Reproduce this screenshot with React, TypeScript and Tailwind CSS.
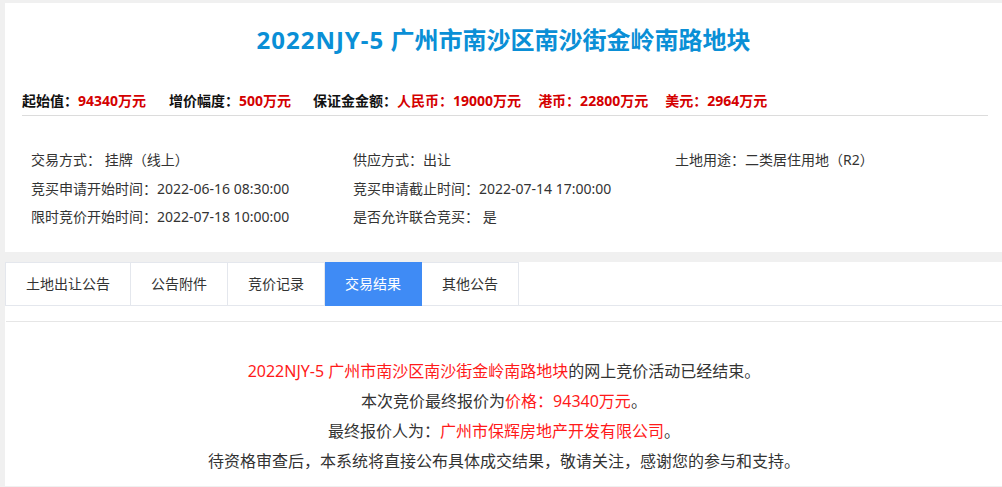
import React from "react";

const Red = ({ children }: { children: React.ReactNode }) => (
  <span className="text-[#d40000]">{children}</span>
);

export default function App() {
  const tabs = ["土地出让公告", "公告附件", "竞价记录", "交易结果", "其他公告"];
  return (
    <div
      className="min-h-screen bg-[#f0f0f0] pt-[3px] pl-[5px]"
      style={{ fontFamily: '"Noto Sans", "Noto Sans CJK SC", sans-serif' }}
    >
      <div className="bg-white pb-[20px]">
        <h1 className="pt-[22px] text-center text-[24px] font-bold leading-[30px] text-[#0a8fd6]">
          <span className="tracking-[1px]">2022NJY-5</span> 广州市南沙区南沙街金岭南路地块
        </h1>
        <div className="mt-[36px] flex pl-[17px] text-[14px] font-bold leading-[20px] text-[#111]">
          <span>
            起始值：<Red>94340万元</Red>
          </span>
          <span className="ml-[23px]">
            增价幅度：<Red>500万元</Red>
          </span>
          <span className="ml-[22px]">
            保证金金额：<Red>人民币：19000万元</Red>
          </span>
          <span className="ml-[17px]">
            <Red>港币：22800万元</Red>
          </span>
          <span className="ml-[17px]">
            <Red>美元：2964万元</Red>
          </span>
        </div>
        <div className="ml-[17px] mt-[4px] h-px w-[966px] bg-[#dcdcdc]" />
        <div className="mt-[30px] grid grid-cols-[322px_322px_1fr] pl-[26px] text-[14px] leading-[28.5px] text-[#333]">
          <div>交易方式： 挂牌（线上）</div>
          <div>供应方式：出让</div>
          <div>土地用途：二类居住用地（R2）</div>
          <div>竞买申请开始时间：2022-06-16 08:30:00</div>
          <div>竞买申请截止时间：2022-07-14 17:00:00</div>
          <div></div>
          <div>限时竞价开始时间：2022-07-18 10:00:00</div>
          <div>是否允许联合竞买： 是</div>
          <div></div>
        </div>
      </div>

      <div className="mt-[10px] bg-white">
        <div className="flex border-b border-[#e4e7ed]">
          {tabs.map((t, i) => (
            <div
              key={t}
              className={
                i === 3
                  ? "-mb-px h-[44px] border-t border-r border-b border-[#3f8bf5] bg-[#3f8bf5] px-[20px] text-[14px] leading-[42px] text-white"
                  : i === 0
                  ? "h-[43px] border-t border-r border-l border-[#e4e7ed] px-[20px] text-[14px] leading-[42px] text-[#333]"
                  : "h-[43px] border-t border-r border-[#e4e7ed] px-[20px] text-[14px] leading-[42px] text-[#333]"
              }
            >
              {t}
            </div>
          ))}
        </div>
        <div className="h-[15px]" />
        <div className="ml-px border-t border-[#e6e6e6] pt-[34px] pb-[10px] text-center text-[16px] leading-[30px] text-[#333]">
          <p>
            <span className="text-[#ff1a1a]">2022NJY-5 广州市南沙区南沙街金岭南路地块</span>
            的网上竞价活动已经结束。
          </p>
          <p>
            本次竞价最终报价为<span className="text-[#ff1a1a]">价格：94340万元</span>。
          </p>
          <p>
            最终报价人为：<span className="text-[#ff1a1a]">广州市保辉房地产开发有限公司</span>。
          </p>
          <p>待资格审查后，本系统将直接公布具体成交结果，敬请关注，感谢您的参与和支持。</p>
        </div>
      </div>
    </div>
  );
}
